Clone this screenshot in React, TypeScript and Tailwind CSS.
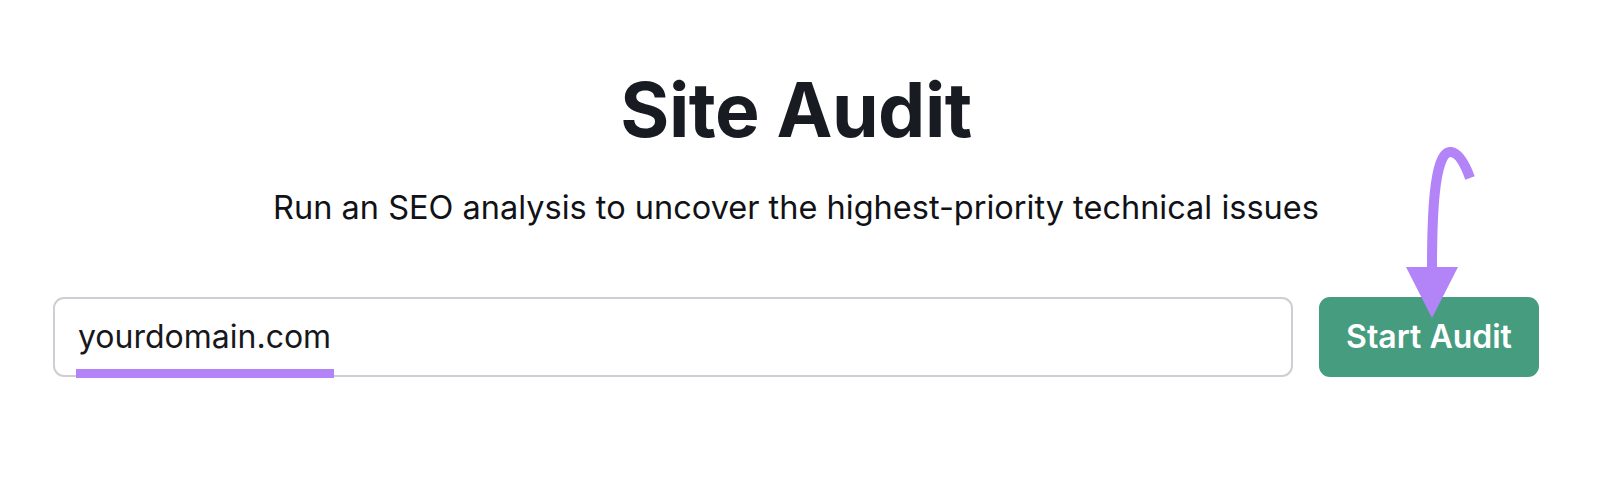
import React from "react";

export default function App() {
  return (
    <div
      className="relative w-[1600px] h-[478px] bg-white overflow-hidden"
      style={{ fontFamily: "Inter, 'Noto Sans', sans-serif" }}
    >
      <div className="pl-[53px] pr-[61px] pt-[72px] flex flex-col items-center">
        <h1 className="text-[75px] leading-[75px] font-bold text-[#191b23] tracking-[-0.5px]">
          Site Audit
        </h1>
        <p className="mt-[43px] text-[32.5px] leading-[36px] text-[#111217]">
          Run an SEO analysis to uncover the highest-priority technical issues
        </p>
        <div className="mt-[71px] w-full flex gap-[26px]">
          <div className="relative flex-1 h-[80px] border-2 border-[#cdcfd4] rounded-[11px] flex items-center pl-[23px]">
            <span className="text-[32px] text-[#17181c]">yourdomain.com</span>
            <div className="absolute left-[21px] top-[70px] w-[258px] h-[9px] bg-[#b384f7]" />
          </div>
          <button className="w-[220px] h-[80px] rounded-[11px] bg-[#469c7f] text-white text-[32px] font-semibold">
            Start Audit
          </button>
        </div>
      </div>
      <svg
        className="absolute left-0 top-0 pointer-events-none"
        width="1600"
        height="478"
        viewBox="0 0 1600 478"
      >
        <path
          d="M1432 270 C1432 225 1433 150 1451 152 C1459 153 1465 164 1470 178"
          fill="none"
          stroke="#b384f7"
          strokeWidth="10"
        />
        <polygon points="1406,267 1458,267 1432,318" fill="#b384f7" />
      </svg>
    </div>
  );
}
